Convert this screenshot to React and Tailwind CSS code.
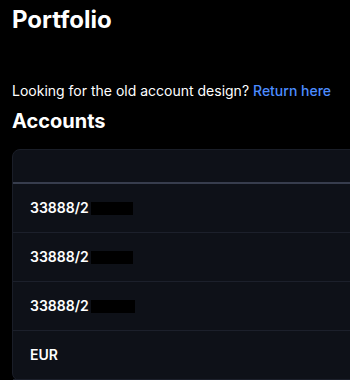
import React from "react";

const rows = [
  { label: "33888/2", hidden: "w-[42px]" },
  { label: "33888/2", hidden: "w-[42px]" },
  { label: "33888/2", hidden: "w-[44px]" },
  { label: "EUR", hidden: null },
];

export default function App() {
  return (
    <div className="min-h-screen bg-black text-white px-3 overflow-hidden font-['Inter',sans-serif]">
      {/* Header */}
      <h1 className="pt-1 text-2xl font-bold leading-8">Portfolio</h1>

      <p className="mt-[45px] text-sm leading-5">
        Looking for the old account design?{" "}
        <a href="#" className="text-[#4d8dff] font-medium">Return here</a>
      </p>
      <h2 className="mt-1.5 text-xl font-bold leading-7">Accounts</h2>

      {/* Accounts table */}
      <div className="mt-[14px] w-[400px] rounded-lg border border-[#1a1e28] bg-[#0e1118]">
        <div className="h-[34px] border-b-2 border-[#373d4d]" />
        {rows.map((row, i) => (
          <div
            key={i}
            className="h-[49px] flex items-center px-[17px] border-b border-[#1c202b] text-sm font-semibold"
          >
            <span>{row.label}</span>
            {row.hidden && <span className={`${row.hidden} ml-[2px] h-[13px] bg-black`} />}
          </div>
        ))}
      </div>
    </div>
  );
}
